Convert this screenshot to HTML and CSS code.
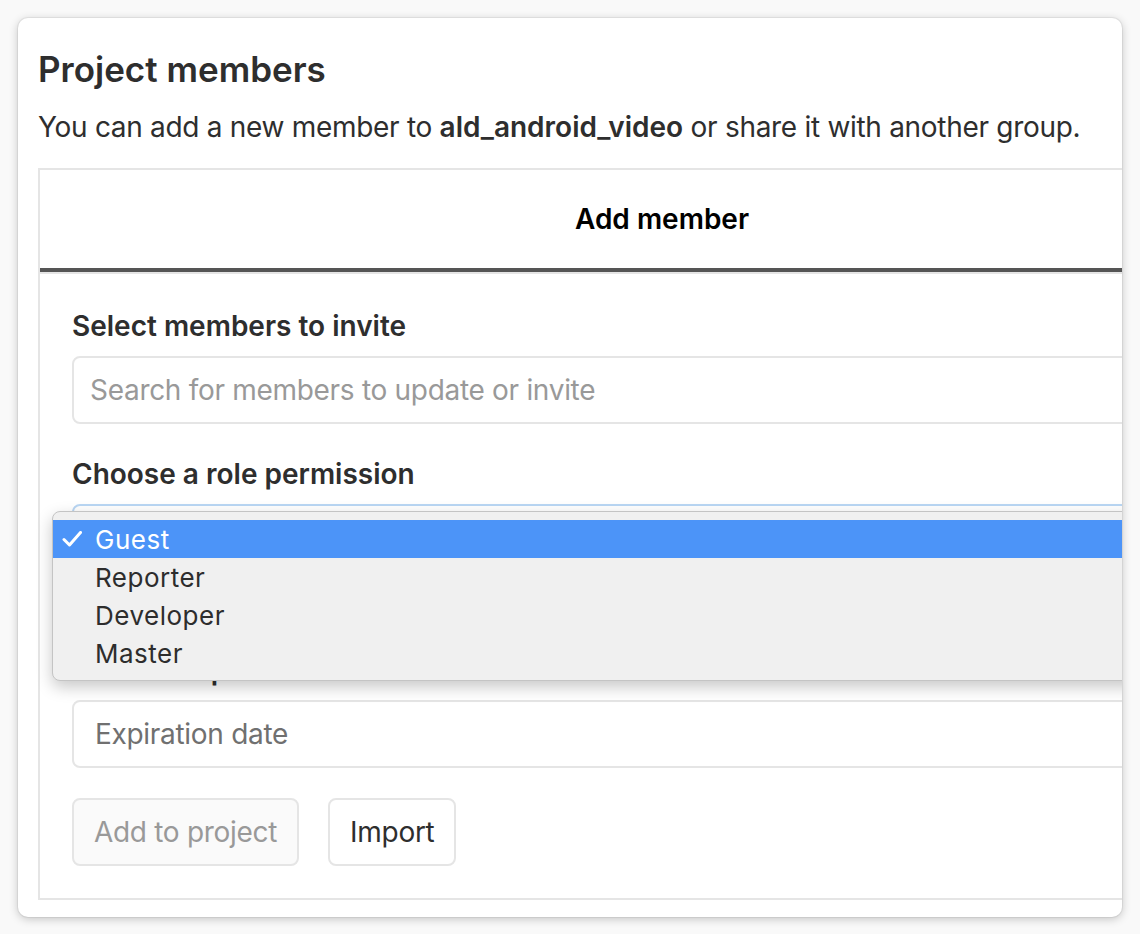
FILE: index.html
```html
<!DOCTYPE html>
<html lang="en">
<head>
<meta charset="utf-8">
<title>Project members</title>
<link rel="stylesheet" href="styles.css">
</head>
<body>
<div class="window">
  <h4 class="title">Project members</h4>
  <p class="lead">You can add a new member to <strong>ald_android_video</strong> or share it with another group.</p>
  <div class="panel">
    <ul class="tabs">
      <li class="tab active">Add member</li>
    </ul>
    <form class="form">
      <div class="group">
        <label class="label">Select members to invite</label>
        <input class="input search" type="text" placeholder="Search for members to update or invite">
      </div>
      <div class="group">
        <label class="label">Choose a role permission</label>
        <div class="select">Guest</div>
        <div class="help">Read more about role permissions</div>
      </div>
      <div class="group">
        <label class="label">Access expiration date</label>
        <input class="input date" type="text" placeholder="Expiration date">
      </div>
      <div class="actions">
        <button type="button" class="btn" disabled>Add to project</button>
        <button type="button" class="btn">Import</button>
      </div>
    </form>
  </div>
  <ul class="menu">
    <li class="item selected"><span class="check"><svg width="20" height="16" viewBox="0 0 20 16"><polyline points="2,8.5 7.5,14 18.5,1.5" fill="none" stroke="#fff" stroke-width="3" stroke-linecap="round" stroke-linejoin="round"/></svg></span>Guest</li>
    <li class="item"><span class="check"></span>Reporter</li>
    <li class="item"><span class="check"></span>Developer</li>
    <li class="item"><span class="check"></span>Master</li>
  </ul>
</div>
</body>
</html>
```
FILE: styles.css
```css
html, body {
  margin: 0;
  padding: 0;
  background: #f9f9f9;
}
body {
  font-family: Inter, "Noto Sans", "Liberation Sans", sans-serif;
  color: #2e2e2e;
  padding: 18px;
  width: 1104px;
  letter-spacing: -0.3px;
}
.window {
  position: relative;
  width: 1104px;
  box-sizing: border-box;
  background: #fff;
  border-radius: 10px;
  overflow: hidden;
  padding: 30px 20px 17px;
  box-shadow: 0 0 0 1px rgba(0,0,0,0.05), 0 2px 10px rgba(0,0,0,0.22);
}
.title {
  margin: 0;
  font-size: 35px;
  line-height: 42px;
  font-weight: 600;
  color: #2e2e2e;
  letter-spacing: 0;
}
.lead {
  margin: 17px 0 21px;
  font-size: 28px;
  line-height: 40px;
  white-space: nowrap;
}
.lead strong { font-weight: 600; letter-spacing: 0; }
.panel {
  width: 1244px;
  border: 2px solid #e5e5e5;
}
.tabs {
  list-style: none;
  margin: 0;
  padding: 0;
  border-bottom: 2px solid #e5e5e5;
}
.tab {
  height: 98px;
  box-sizing: content-box;
  padding: 0;
  display: flex;
  align-items: center;
  justify-content: center;
  font-size: 28px;
  line-height: 40px;
  font-weight: 600;
  color: #000;
  letter-spacing: 0;
  border-bottom: 4px solid #555;
}
.form {
  padding: 32px 32px 32px;
}
.group {
  margin-bottom: 30px;
}
.label {
  display: block;
  font-size: 28px;
  line-height: 40px;
  font-weight: 600;
  letter-spacing: 0;
  margin-bottom: 10px;
}
.input {
  display: block;
  width: 100%;
  height: 68px;
  box-sizing: border-box;
  border: 2px solid #e5e5e5;
  border-radius: 8px;
  font-family: inherit;
  font-size: 28px;
  letter-spacing: -0.3px;
  color: #2e2e2e;
  background: #fff;
  outline: none;
}
.input.search { padding: 0 16px; }
.input.search::placeholder { color: #999; }
.input.date { padding: 0 21px; }
.input.date::placeholder { color: #707070; }
.select {
  height: 68px;
  box-sizing: border-box;
  border: 2px solid #b9d6f3;
  border-radius: 8px;
  padding: 0 20px;
  font-size: 28px;
  line-height: 64px;
}
.help {
  margin-top: 8px;
  font-size: 28px;
  line-height: 40px;
  color: #707070;
}
.actions {
  display: flex;
  gap: 29px;
}
.btn {
  height: 68px;
  box-sizing: border-box;
  padding: 0 20px;
  border: 2px solid #e5e5e5;
  border-radius: 8px;
  background: #fff;
  font-family: inherit;
  font-size: 28px;
  letter-spacing: -0.3px;
  color: #2e2e2e;
}
.btn:disabled {
  background: #fafafa;
  color: #999;
}
.menu {
  position: absolute;
  left: 34px;
  top: 493px;
  width: 1120px;
  margin: 0;
  padding: 8px 0;
  list-style: none;
  background: #f0f0f0;
  border: 1px solid #c4c4c4;
  border-radius: 8px;
  box-shadow: 0 6px 16px rgba(0,0,0,0.22);
}
.item {
  display: flex;
  align-items: center;
  height: 38px;
  font-size: 26px;
  letter-spacing: 0.5px;
  color: #2d2d2d;
}
.item.selected {
  background: #4c94f8;
  color: #fff;
}
.check {
  width: 42px;
  padding-left: 9px;
  box-sizing: border-box;
  display: flex;
  align-items: center;
}
.check svg { display: block; }
```
